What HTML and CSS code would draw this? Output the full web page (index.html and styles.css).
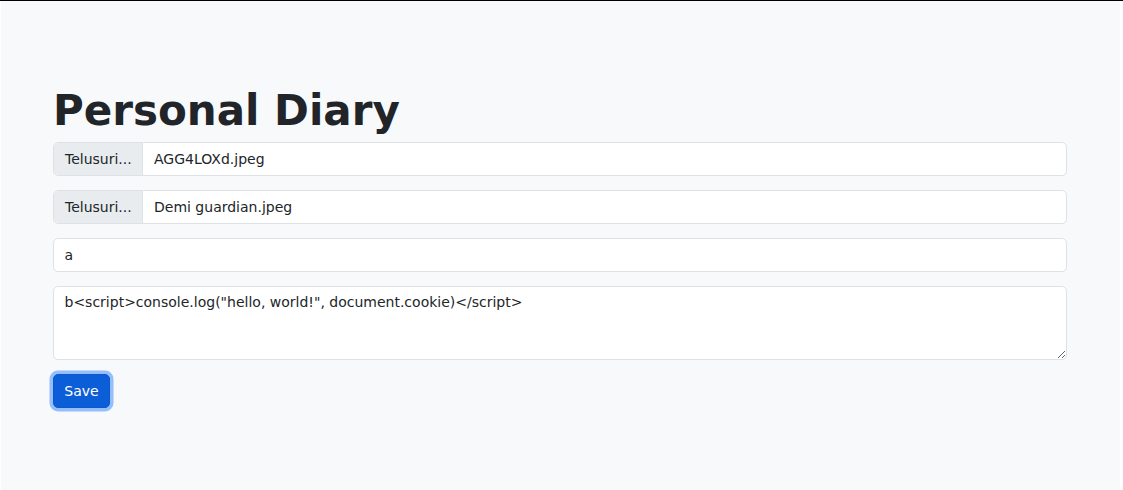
FILE: index.html
```html
<!DOCTYPE html>
<html lang="en">
<head>
<meta charset="utf-8">
<title>Personal Diary</title>
<link rel="stylesheet" href="styles.css">
</head>
<body>
<div class="page">
  <h1 class="title">Personal Diary</h1>
  <form class="diary-form">
    <div class="file-group">
      <span class="file-btn">Telusuri...</span>
      <span class="file-name">AGG4LOXd.jpeg</span>
    </div>
    <div class="file-group">
      <span class="file-btn">Telusuri...</span>
      <span class="file-name">Demi guardian.jpeg</span>
    </div>
    <input class="field" type="text" value="a">
    <textarea class="field area">b&lt;script&gt;console.log("hello, world!", document.cookie)&lt;/script&gt;</textarea>
    <div class="actions">
      <button type="button" class="save-btn">Save</button>
    </div>
  </form>
</div>
</body>
</html>
```

FILE: styles.css
```css
html {
  background: #fff;
}
body {
  margin: 0;
  border-top: 1px solid #000;
  font-family: "DejaVu Sans", sans-serif;
  color: #212529;
}
.page {
  margin: 0 3px 0 1px;
  min-height: 489px;
  box-sizing: border-box;
  background: #f8f9fa;
  padding: 85px 53px 0 52px;
}
.title {
  margin: 0 0 6px;
  font-size: 42px;
  line-height: 50px;
  font-weight: 700;
  color: #212529;
}
.diary-form {
  display: flex;
  flex-direction: column;
  gap: 14px;
}
.file-group {
  display: flex;
  height: 34px;
  box-sizing: border-box;
  border: 1px solid #dee2e6;
  border-radius: 5px;
  background: #fff;
  overflow: hidden;
  font-size: 14px;
  line-height: 21px;
}
.file-btn {
  display: flex;
  align-items: center;
  padding: 0 10.5px 0 11px;
  background: #e9ecef;
  border-right: 1px solid #dee2e6;
  width: 89px;
  box-sizing: border-box;
}
.file-name {
  display: flex;
  align-items: center;
  padding-left: 11px;
}
.field {
  display: block;
  width: 100%;
  box-sizing: border-box;
  height: 34px;
  margin: 0;
  padding: 5px 10.5px;
  border: 1px solid #dee2e6;
  border-radius: 5px;
  background: #fff;
  font-family: "DejaVu Sans", sans-serif;
  font-size: 14px;
  line-height: 21px;
  color: #212529;
  outline: none;
}
.area {
  height: 74px;
  resize: vertical;
}
.actions {
  display: flex;
}
.save-btn {
  height: 34px;
  width: 57px;
  padding: 0;
  border: 1px solid #0a58ca;
  border-radius: 5px;
  background: #0b5ed7;
  color: #fff;
  font-family: "DejaVu Sans", sans-serif;
  font-size: 14px;
  box-shadow: 0 0 0 3.5px rgba(49, 132, 253, 0.5);
}
```
